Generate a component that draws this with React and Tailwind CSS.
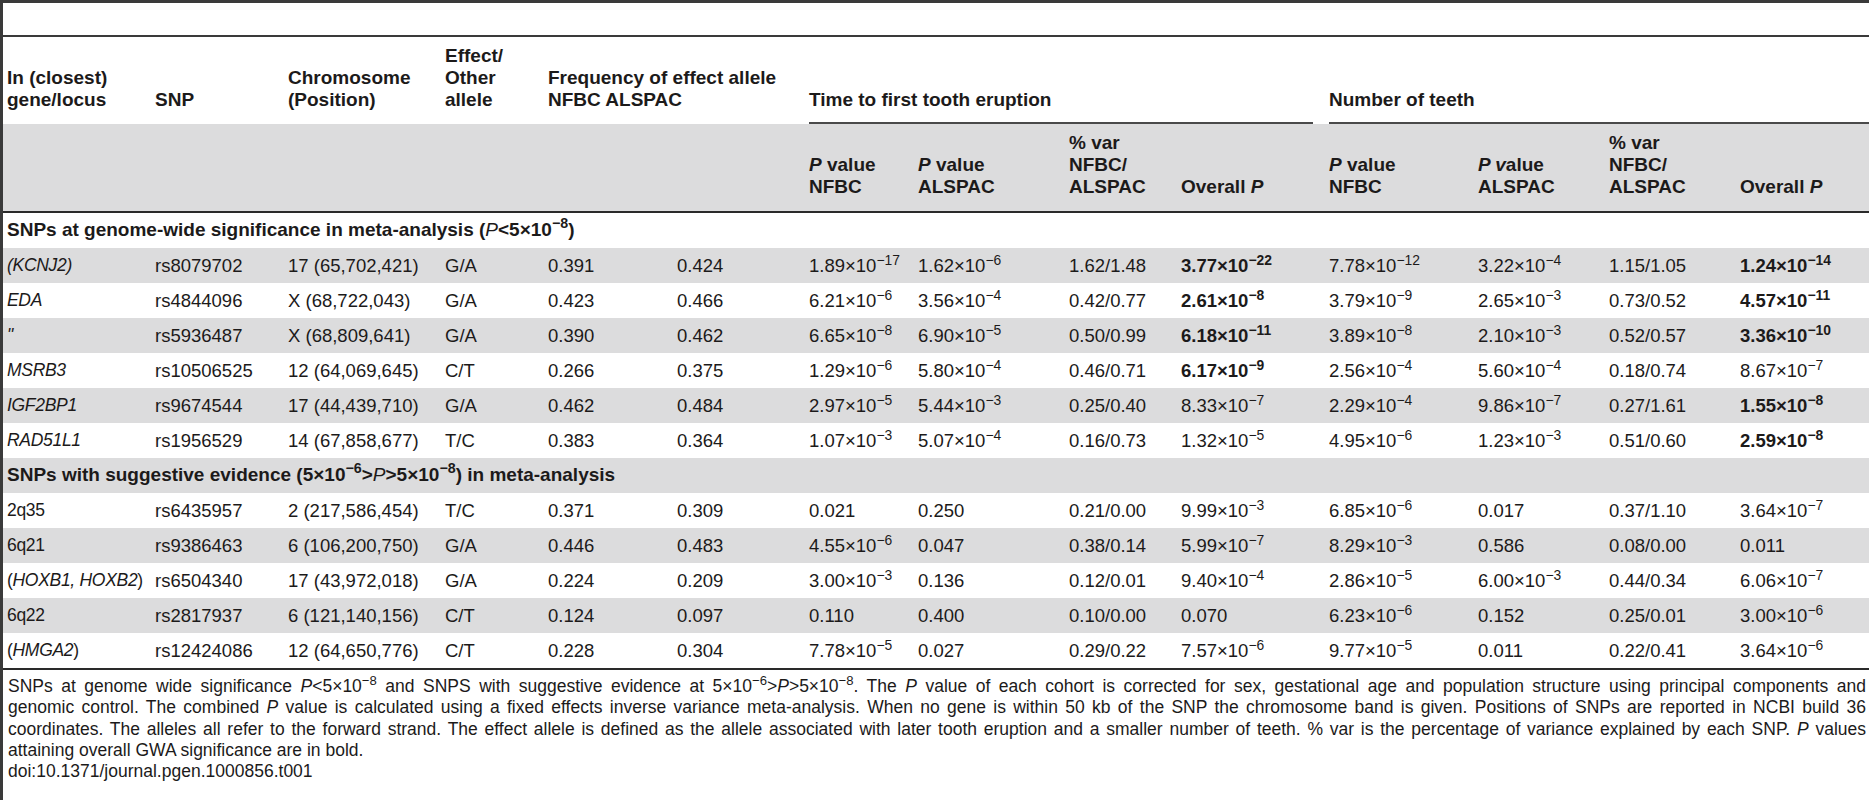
import React from 'react';

const GRID = 'grid grid-cols-[152px_133px_157px_103px_129px_132px_109px_151px_112px_148px_149px_131px_131px_1fr]';

const ROWS = [
  [<i>(KCNJ2)</i>, 'rs8079702', '17 (65,702,421)', 'G/A', '0.391', '0.424', '1.89e17', '1.62e6', '1.62/1.48', '*3.77e22', '7.78e12', '3.22e4', '1.15/1.05', '*1.24e14'],
  [<i>EDA</i>, 'rs4844096', 'X (68,722,043)', 'G/A', '0.423', '0.466', '6.21e6', '3.56e4', '0.42/0.77', '*2.61e8', '3.79e9', '2.65e3', '0.73/0.52', '*4.57e11'],
  [<i>"</i>, 'rs5936487', 'X (68,809,641)', 'G/A', '0.390', '0.462', '6.65e8', '6.90e5', '0.50/0.99', '*6.18e11', '3.89e8', '2.10e3', '0.52/0.57', '*3.36e10'],
  [<i>MSRB3</i>, 'rs10506525', '12 (64,069,645)', 'C/T', '0.266', '0.375', '1.29e6', '5.80e4', '0.46/0.71', '*6.17e9', '2.56e4', '5.60e4', '0.18/0.74', '8.67e7'],
  [<i>IGF2BP1</i>, 'rs9674544', '17 (44,439,710)', 'G/A', '0.462', '0.484', '2.97e5', '5.44e3', '0.25/0.40', '8.33e7', '2.29e4', '9.86e7', '0.27/1.61', '*1.55e8'],
  [<i>RAD51L1</i>, 'rs1956529', '14 (67,858,677)', 'T/C', '0.383', '0.364', '1.07e3', '5.07e4', '0.16/0.73', '1.32e5', '4.95e6', '1.23e3', '0.51/0.60', '*2.59e8'],
];

const ROWS2 = [
  ['2q35', 'rs6435957', '2 (217,586,454)', 'T/C', '0.371', '0.309', '0.021', '0.250', '0.21/0.00', '9.99e3', '6.85e6', '0.017', '0.37/1.10', '3.64e7'],
  ['6q21', 'rs9386463', '6 (106,200,750)', 'G/A', '0.446', '0.483', '4.55e6', '0.047', '0.38/0.14', '5.99e7', '8.29e3', '0.586', '0.08/0.00', '0.011'],
  [<>(<i>HOXB1, HOXB2</i>)</>, 'rs6504340', '17 (43,972,018)', 'G/A', '0.224', '0.209', '3.00e3', '0.136', '0.12/0.01', '9.40e4', '2.86e5', '6.00e3', '0.44/0.34', '6.06e7'],
  ['6q22', 'rs2817937', '6 (121,140,156)', 'C/T', '0.124', '0.097', '0.110', '0.400', '0.10/0.00', '0.070', '6.23e6', '0.152', '0.25/0.01', '3.00e6'],
  [<>(<i>HMGA2</i>)</>, 'rs12424086', '12 (64,650,776)', 'C/T', '0.228', '0.304', '7.78e5', '0.027', '0.29/0.22', '7.57e6', '9.77e5', '0.011', '0.22/0.41', '3.64e6'],
];

// '1.89e17' -> 1.89×10^-17, leading * means bold
function Value({ v }) {
  if (typeof v !== 'string') return v;
  const bold = v.startsWith('*');
  const s = bold ? v.slice(1) : v;
  if (!s.includes('e')) return <span className={bold ? 'font-bold' : ''}>{s}</span>;
  const [m, e] = s.split('e');
  return (
    <span className={bold ? 'font-bold' : ''}>
      {m}×10<sup>−{e}</sup>
    </span>
  );
}

function DataRow({ cells, gray }) {
  return (
    <div className={`${GRID} h-[35px] items-center ${gray ? 'bg-[#dcdcdd]' : 'bg-white'}`}>
      {cells.map((c, i) => (
        <div key={i} className={`whitespace-nowrap ${i === 0 ? 'pl-[4px] text-[17.5px] tracking-[-0.3px]' : ''}`}>
          <Value v={c} />
        </div>
      ))}
    </div>
  );
}

function Head({ children, className = '' }) {
  return (
    <div className={`flex items-end pb-[13px] ${className}`}>
      <div className="whitespace-nowrap">{children}</div>
    </div>
  );
}

export default function App() {
  return (
    <div className="w-[1869px] h-[800px] overflow-hidden bg-white border-l-[3px] border-t-[3px] border-[#3a3a3a] font-['Liberation_Sans',Arial,sans-serif] text-[18.5px] text-[#1c1a1a]">
      <div className="h-[34px] border-b-2 border-[#3a3a3a]" />

      {/* column headers */}
      <div className={`${GRID} h-[87px] font-bold text-[19px] leading-[22px]`}>
        <Head className="pl-[4px]">In (closest)<br />gene/locus</Head>
        <Head>SNP</Head>
        <Head>Chromosome<br />(Position)</Head>
        <Head>Effect/<br />Other<br />allele</Head>
        <Head className="col-span-2">Frequency of effect allele<br />NFBC ALSPAC</Head>
        <Head className="col-span-4 mr-[16px] border-b-2 border-[#4a4a4a] !pb-[11px]">Time to first tooth eruption</Head>
        <Head className="col-span-4 border-b-2 border-[#4a4a4a] !pb-[11px]">Number of teeth</Head>
      </div>
      <div className={`${GRID} h-[89px] font-bold text-[19px] leading-[22px] bg-[#dcdcdd] border-b-2 border-[#2a2a2a]`}>
        <div className="col-span-6" />
        <Head><i>P</i> value<br />NFBC</Head>
        <Head><i>P</i> value<br />ALSPAC</Head>
        <Head>% var<br />NFBC/<br />ALSPAC</Head>
        <Head>Overall <i>P</i></Head>
        <Head><i>P</i> value<br />NFBC</Head>
        <Head><i>P v</i>alue<br />ALSPAC</Head>
        <Head>% var<br />NFBC/<br />ALSPAC</Head>
        <Head>Overall <i>P</i></Head>
      </div>

      {/* body */}
      <div className="h-[35px] flex items-center pl-[4px] font-bold text-[19px] bg-white whitespace-nowrap">
        SNPs at genome-wide significance in meta-analysis (<i className="font-normal">P</i>&lt;5×10<sup>−8</sup>)
      </div>
      {ROWS.map((r, i) => <DataRow key={i} cells={r} gray={i % 2 === 0} />)}
      <div className="h-[35px] flex items-center pl-[4px] font-bold text-[19px] bg-[#dcdcdd] whitespace-nowrap">
        SNPs with suggestive evidence (5×10<sup>−6</sup>&gt;<i className="font-normal">P</i>&gt;5×10<sup>−8</sup>) in meta-analysis
      </div>
      {ROWS2.map((r, i) => <DataRow key={i} cells={r} gray={i % 2 === 1} />)}

      {/* footnote */}
      <div className="border-t-2 border-[#2a2a2a] pt-[6px] pl-[5px] pr-[3px] text-[17.5px] leading-[21.3px]">
        <div className="text-justify [text-align-last:justify]">
          SNPs at genome wide significance <i>P</i>&lt;5×10<sup>−8</sup> and SNPS with suggestive evidence at 5×10<sup>−6</sup>&gt;<i>P</i>&gt;5×10<sup>−8</sup>. The <i>P</i> value of each cohort is corrected for sex, gestational age and population structure using principal components and
        </div>
        <div className="text-justify [text-align-last:justify]">
          genomic control. The combined <i>P</i> value is calculated using a fixed effects inverse variance meta-analysis. When no gene is within 50 kb of the SNP the chromosome band is given. Positions of SNPs are reported in NCBI build 36
        </div>
        <div className="text-justify [text-align-last:justify]">
          coordinates. The alleles all refer to the forward strand. The effect allele is defined as the allele associated with later tooth eruption and a smaller number of teeth. % var is the percentage of variance explained by each SNP. <i>P</i> values
        </div>
        <div>attaining overall GWA significance are in bold.</div>
        <div>doi:10.1371/journal.pgen.1000856.t001</div>
      </div>
    </div>
  );
}
